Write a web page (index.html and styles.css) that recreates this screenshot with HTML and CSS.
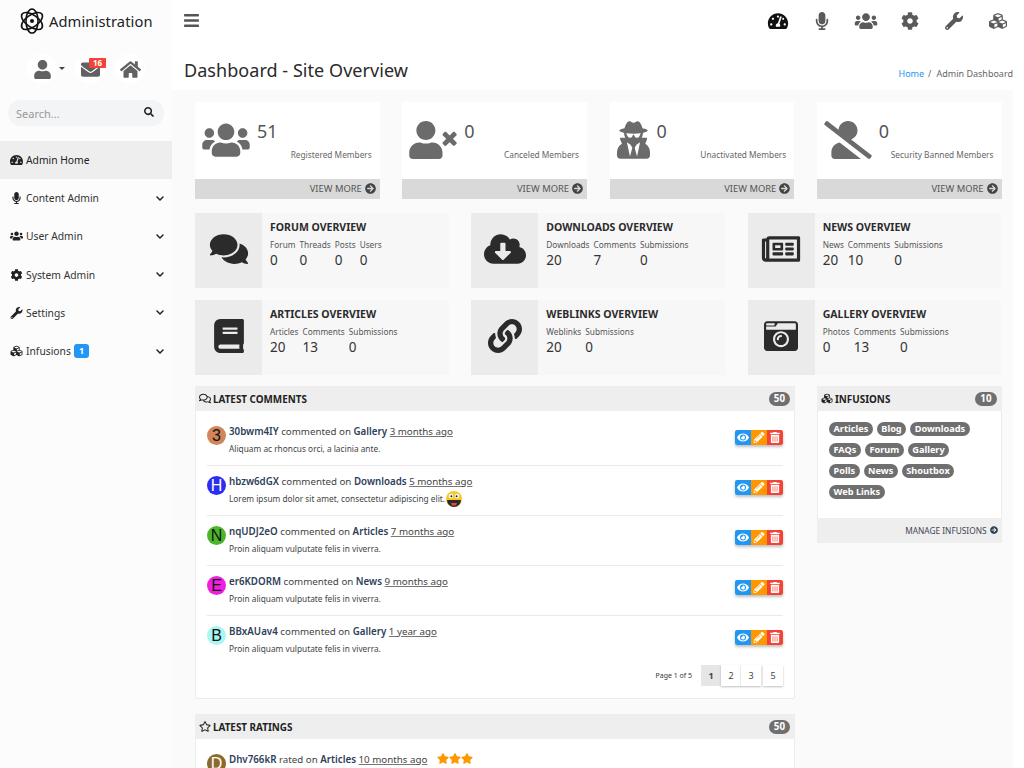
FILE: index.html
```html
<!DOCTYPE html>
<html lang="en">
<head>
<meta charset="utf-8">
<title>Administration</title>
<link rel="stylesheet" href="styles.css">
</head>
<body>
<svg class="sprite" xmlns="http://www.w3.org/2000/svg">
<symbol id="i-gauge" viewBox="0 0 576 512"><path d="M288 32C128.94 32 0 160.94 0 320c0 52.8 14.25 102.26 39.06 144.8 5.61 9.62 16.3 15.2 27.44 15.2h443c11.14 0 21.83-5.58 27.44-15.2C561.75 422.26 576 372.8 576 320c0-159.06-128.94-288-288-288zm0 64c14.71 0 26.58 10.13 30.32 23.65-1.11 2.26-2.64 4.23-3.45 6.67l-9.22 27.67c-5.13 3.49-10.97 6.01-17.64 6.01-17.67 0-32-14.33-32-32S270.33 96 288 96zM96 384c-17.67 0-32-14.33-32-32s14.33-32 32-32 32 14.33 32 32-14.33 32-32 32zm48-160c-17.67 0-32-14.33-32-32s14.33-32 32-32 32 14.33 32 32-14.33 32-32 32zm246.77-72.41l-61.33 184C343.13 347.33 352 364.54 352 384c0 11.72-3.38 22.55-8.88 32H232.88c-5.5-9.45-8.88-20.28-8.88-32 0-33.94 26.5-61.43 59.9-63.59l61.34-184.01c4.17-12.56 17.73-19.45 30.36-15.17 12.57 4.19 19.35 17.79 15.17 30.36zm14.66 57.2l15.52-46.55c3.47-1.29 7.13-2.23 11.05-2.23 17.67 0 32 14.33 32 32s-14.33 32-32 32c-11.38-.01-20.89-6.28-26.57-15.22zM480 384c-17.67 0-32-14.33-32-32s14.33-32 32-32 32 14.33 32 32-14.33 32-32 32z"/></symbol>
<symbol id="i-mic" viewBox="0 0 352 512"><path d="M176 352c53.02 0 96-42.98 96-96V96c0-53.02-42.98-96-96-96S80 42.98 80 96v160c0 53.02 42.98 96 96 96zm160-160h-16c-8.84 0-16 7.16-16 16v48c0 74.8-64.49 134.82-140.79 127.38C96.71 376.89 48 317.11 48 250.3V208c0-8.84-7.16-16-16-16H16c-8.84 0-16 7.16-16 16v40.16c0 89.64 63.97 169.55 152 181.69V464H96c-8.84 0-16 7.16-16 16v16c0 8.84 7.16 16 16 16h160c8.84 0 16-7.16 16-16v-16c0-8.84-7.16-16-16-16h-56v-33.77C285.71 418.47 352 344.9 352 256v-48c0-8.84-7.16-16-16-16z"/></symbol>
<symbol id="i-users" viewBox="0 0 640 512"><path d="M96 224c35.3 0 64-28.7 64-64s-28.7-64-64-64-64 28.7-64 64 28.7 64 64 64zm448 0c35.3 0 64-28.7 64-64s-28.7-64-64-64-64 28.7-64 64 28.7 64 64 64zm32 32h-64c-17.6 0-33.5 7.1-45.1 18.6 40.3 22.1 68.9 62 75.1 109.4h66c17.7 0 32-14.3 32-32v-32c0-35.3-28.7-64-64-64zm-256 0c61.9 0 112-50.1 112-112S381.9 32 320 32 208 82.1 208 144s50.1 112 112 112zm76.8 32h-8.3c-20.8 10-43.9 16-68.5 16s-47.6-6-68.5-16h-8.3C179.6 288 128 339.6 128 403.2V432c0 26.5 21.5 48 48 48h288c26.5 0 48-21.5 48-48v-28.8c0-63.6-51.6-115.2-115.2-115.2zm-223.7-13.4C161.5 263.1 145.6 256 128 256H64c-35.3 0-64 28.7-64 64v32c0 17.7 14.3 32 32 32h65.9c6.3-47.4 34.9-87.3 75.2-109.4z"/></symbol>
<symbol id="i-cog" viewBox="0 0 512 512"><path d="M487.4 315.7l-42.6-24.6c4.3-23.2 4.3-47 0-70.2l42.6-24.6c4.9-2.8 7.1-8.6 5.5-14-11.1-35.6-30-67.8-54.7-94.6-3.8-4.1-10-5.1-14.8-2.3L380.8 110c-17.9-15.4-38.5-27.3-60.8-35.1V25.8c0-5.6-3.9-10.5-9.4-11.7-36.7-8.2-74.3-7.8-109.2 0-5.5 1.2-9.4 6.1-9.4 11.7V75c-22.2 7.9-42.8 19.8-60.8 35.1L88.7 85.5c-4.9-2.8-11-1.9-14.8 2.3-24.7 26.7-43.6 58.9-54.7 94.6-1.7 5.4.6 11.2 5.5 14L67.3 221c-4.3 23.2-4.3 47 0 70.2l-42.6 24.6c-4.9 2.8-7.1 8.6-5.5 14 11.1 35.6 30 67.8 54.7 94.6 3.8 4.1 10 5.1 14.8 2.3l42.6-24.6c17.9 15.4 38.5 27.3 60.8 35.1v49.2c0 5.6 3.9 10.5 9.4 11.7 36.7 8.2 74.3 7.8 109.2 0 5.5-1.2 9.4-6.1 9.4-11.7v-49.2c22.2-7.9 42.8-19.8 60.8-35.1l42.6 24.6c4.9 2.8 11 1.9 14.8-2.3 24.7-26.7 43.6-58.9 54.7-94.6 1.5-5.5-.7-11.3-5.6-14.1zM256 336c-44.1 0-80-35.9-80-80s35.9-80 80-80 80 35.9 80 80-35.9 80-80 80z"/></symbol>
<symbol id="i-wrench" viewBox="0 0 512 512"><path d="M507.73 109.1c-2.24-9.03-13.54-12.09-20.12-5.51l-74.36 74.36-67.88-11.31-11.31-67.88 74.36-74.36c6.62-6.62 3.43-17.9-5.66-20.16-47.38-11.74-99.55.91-136.58 37.93-39.64 39.64-50.55 97.1-34.05 147.2L18.74 402.76c-24.99 24.99-24.99 65.51 0 90.5 24.99 24.99 65.51 24.99 90.5 0l213.21-213.21c50.12 16.71 107.47 5.68 147.37-34.22 37.07-37.07 49.7-89.32 37.91-136.73zM64 472c-13.25 0-24-10.75-24-24 0-13.26 10.75-24 24-24s24 10.74 24 24c0 13.25-10.75 24-24 24z"/></symbol>
<symbol id="i-cubes" viewBox="0 0 512 512"><path d="M488.6 250.2L392 214V105.5c0-15-9.3-28.4-23.4-33.7l-100-37.5c-8.1-3.1-17.1-3.1-25.3 0l-100 37.5c-14.1 5.3-23.4 18.7-23.4 33.7V214l-96.6 36.2C9.3 255.5 0 268.9 0 283.9V394c0 13.6 7.7 26.1 19.9 32.2l100 50c10.1 5.1 22.1 5.1 32.2 0l103.9-52 103.9 52c10.1 5.1 22.1 5.1 32.2 0l100-50c12.2-6.1 19.9-18.6 19.9-32.2V283.9c0-15-9.3-28.4-23.4-33.7zM358 214.8l-85 31.9v-68.2l85-37v73.3zM154 104.1l102-38.2 102 38.2v.6l-102 41.4-102-41.4v-.6zm84 291.1l-85 42.5v-79.1l85-38.8v75.4zm0-112l-102 41.4-102-41.4v-.6l102-38.2 102 38.2v.6zm240 112l-85 42.5v-79.1l85-38.8v75.4zm0-112l-102 41.4-102-41.4v-.6l102-38.2 102 38.2v.6z"/></symbol>
<symbol id="i-user" viewBox="0 0 448 512"><path d="M224 256c70.7 0 128-57.3 128-128S294.7 0 224 0 96 57.3 96 128s57.3 128 128 128zm89.6 32h-16.7c-22.2 10.2-46.9 16-72.9 16s-50.6-5.8-72.9-16h-16.7C60.2 288 0 348.2 0 422.4V464c0 26.5 21.5 48 48 48h352c26.5 0 48-21.5 48-48v-41.6c0-74.2-60.2-134.4-134.4-134.4z"/></symbol>
<symbol id="i-mail" viewBox="0 0 512 512"><path d="M502.3 190.8c3.9-3.1 9.7-.2 9.7 4.7V400c0 26.5-21.5 48-48 48H48c-26.5 0-48-21.5-48-48V195.6c0-5 5.7-7.8 9.7-4.7 22.4 17.4 52.1 39.5 154.1 113.6 21.1 15.4 56.7 47.8 92.2 47.6 35.7.3 72-32.8 92.3-47.6 102-74.1 131.6-96.3 154-113.7zM256 320c23.2.4 56.6-29.2 73.4-41.4 132.7-96.3 142.8-104.7 173.4-128.7 5.8-4.5 9.2-11.5 9.2-18.9v-19c0-26.5-21.5-48-48-48H48C21.5 64 0 85.5 0 112v19c0 7.4 3.4 14.3 9.2 18.9 30.6 23.9 40.7 32.4 173.4 128.7 16.8 12.2 50.2 41.8 73.4 41.4z"/></symbol>
<symbol id="i-home" viewBox="0 0 576 512"><path d="M280.37 148.26L96 300.11V464a16 16 0 0 0 16 16l112.06-.29a16 16 0 0 0 15.92-16V368a16 16 0 0 1 16-16h64a16 16 0 0 1 16 16v95.64a16 16 0 0 0 16 16.05L464 480a16 16 0 0 0 16-16V300L295.67 148.26a12.19 12.19 0 0 0-15.3 0zM571.6 251.47L488 182.56V44.05a12 12 0 0 0-12-12h-56a12 12 0 0 0-12 12v72.61L318.47 43a48 48 0 0 0-61 0L4.34 251.47a12 12 0 0 0-1.6 16.9l25.5 31A12 12 0 0 0 45.15 301l235.22-193.74a12.19 12.19 0 0 1 15.3 0L530.9 301a12 12 0 0 0 16.9-1.6l25.5-31a12 12 0 0 0-1.7-16.93z"/></symbol>
<symbol id="i-search" viewBox="0 0 512 512"><path d="M505 442.7L405.3 343c-4.5-4.5-10.6-7-17-7H372c27.6-35.3 44-79.7 44-128C416 93.1 322.9 0 208 0S0 93.1 0 208s93.1 208 208 208c48.3 0 92.7-16.4 128-44v16.3c0 6.4 2.5 12.5 7 17l99.7 99.7c9.4 9.4 24.6 9.4 33.9 0l28.3-28.3c9.4-9.4 9.4-24.6.1-34zM208 336c-70.7 0-128-57.2-128-128 0-70.7 57.2-128 128-128 70.7 0 128 57.2 128 128 0 70.7-57.2 128-128 128z"/></symbol>
<symbol id="i-chev" viewBox="0 0 448 512"><path d="M207.029 381.476L12.686 187.132c-9.373-9.373-9.373-24.569 0-33.941l22.667-22.667c9.357-9.357 24.522-9.375 33.901-.04L224 284.505l154.745-154.021c9.379-9.335 24.544-9.317 33.901.04l22.667 22.667c9.373 9.373 9.373 24.569 0 33.941L240.971 381.476c-9.373 9.372-24.569 9.372-33.942 0z"/></symbol>
<symbol id="i-bars" viewBox="0 0 448 512"><path d="M16 132h416c8.837 0 16-7.163 16-16V76c0-8.837-7.163-16-16-16H16C7.163 60 0 67.163 0 76v40c0 8.837 7.163 16 16 16zm0 160h416c8.837 0 16-7.163 16-16v-40c0-8.837-7.163-16-16-16H16c-8.837 0-16 7.163-16 16v40c0 8.837 7.163 16 16 16zm0 160h416c8.837 0 16-7.163 16-16v-40c0-8.837-7.163-16-16-16H16c-8.837 0-16 7.163-16 16v40c0 8.837 7.163 16 16 16z"/></symbol>
<symbol id="i-arrow" viewBox="0 0 512 512"><path d="M256 8c137 0 248 111 248 248S393 504 256 504 8 393 8 256 119 8 256 8zm-28.9 143.6l75.5 72.4H120c-13.3 0-24 10.7-24 24v16c0 13.3 10.7 24 24 24h182.6l-75.5 72.4c-9.7 9.3-9.9 24.8-.4 34.3l11 10.9c9.4 9.4 24.6 9.4 33.9 0L404.3 273c9.4-9.4 9.4-24.6 0-33.9L271.6 106.3c-9.4-9.4-24.6-9.4-33.9 0l-11 10.9c-9.5 9.6-9.3 25.1.4 34.4z"/></symbol>
<symbol id="i-user-x" viewBox="0 0 640 512"><path d="M589.6 240l45.6-45.6c6.3-6.3 6.3-16.5 0-22.8l-22.8-22.8c-6.3-6.3-16.5-6.3-22.8 0L544 194.4l-45.6-45.6c-6.3-6.3-16.5-6.3-22.8 0l-22.8 22.8c-6.3 6.3-6.3 16.5 0 22.8l45.6 45.6-45.6 45.6c-6.3 6.3-6.3 16.5 0 22.8l22.8 22.8c6.3 6.3 16.5 6.3 22.8 0l45.6-45.6 45.6 45.6c6.3 6.3 16.5 6.3 22.8 0l22.8-22.8c6.3-6.3 6.3-16.5 0-22.8L589.6 240zM224 256c70.7 0 128-57.3 128-128S294.7 0 224 0 96 57.3 96 128s57.3 128 128 128zm89.6 32h-16.7c-22.2 10.2-46.9 16-72.9 16s-50.6-5.8-72.9-16h-16.7C60.2 288 0 348.2 0 422.4V464c0 26.5 21.5 48 48 48h352c26.5 0 48-21.5 48-48v-41.6c0-74.2-60.2-134.4-134.4-134.4z"/></symbol>
<symbol id="i-secret" viewBox="0 0 448 512"><path d="M383.9 308.3l23.9-62.6c4-10.5-3.7-21.7-15-21.7h-58.5c11-18.9 17.8-40.6 17.8-64v-.3c39.2-7.8 64-19.1 64-31.7 0-13.3-27.3-25.1-70.1-33-9.2-32.8-27-65.8-40.6-82.8-9.5-11.9-25.9-15.6-39.5-8.8l-27.6 13.8c-9 4.5-19.6 4.5-28.6 0L182.1 3.4c-13.6-6.8-30-3.1-39.5 8.8-13.5 17-31.4 50-40.6 82.8-42.7 7.9-70 19.7-70 33 0 12.6 24.8 23.9 64 31.7v.3c0 23.4 6.8 45.1 17.8 64H56.3c-11.5 0-19.2 11.7-14.7 22.3l25.8 60.2C27.3 329.8 0 372.7 0 422.4v44.8C0 491.9 20.1 512 44.8 512h358.4c24.7 0 44.8-20.1 44.8-44.8v-44.8c0-48.4-25.8-90.4-64.1-114.1zM176 480l-41.6-192 49.6 32 24 40-32 120zm96 0l-32-120 24-40 49.6-32L272 480zm41.7-298.5c-3.9 11.9-7 24.6-16.5 33.4-10.1 9.3-48 22.4-64-25-2.8-8.4-15.4-8.4-18.3 0-17 50.2-56 32.4-64 25-9.5-8.8-12.7-21.5-16.5-33.4-.8-2.5-6.3-5.7-6.3-5.8v-10.8c28.3 3.6 61 5.8 96 5.8s67.7-2.1 96-5.8v10.8c-.1.1-5.6 3.2-6.4 5.8z"/></symbol>
<symbol id="i-slash" viewBox="0 0 640 512"><path d="M633.8 458.1L362.3 248.3C412.1 230.7 448 183.8 448 128 448 57.3 390.7 0 320 0c-67.1 0-121.5 51.8-126.9 117.4L45.5 3.4C38.5-2 28.5-.8 23 6.2L3.4 31.4c-5.4 7-4.2 17 2.8 22.4l588.4 454.7c7 5.4 17 4.2 22.5-2.8l19.6-25.3c5.4-6.8 4.1-16.9-2.9-22.3zM96 422.4V464c0 26.5 21.5 48 48 48h350.2L207.4 290.3C144.2 301.3 96 356 96 422.4z"/></symbol>
<symbol id="i-comments" viewBox="0 0 576 512"><path d="M416 192c0-88.4-93.1-160-208-160S0 103.6 0 192c0 34.3 14.1 65.9 38 92-13.4 30.2-35.5 54.2-35.8 54.5-2.2 2.3-2.8 5.7-1.5 8.7S4.8 352 8 352c36.6 0 66.9-12.3 88.7-25 32.2 15.7 70.3 25 111.3 25 114.9 0 208-71.6 208-160zm122 220c23.9-26 38-57.7 38-92 0-66.9-53.5-124.2-129.3-148.1.9 6.6 1.3 13.3 1.3 20.1 0 105.9-107.7 192-240 192-10.8 0-21.3-.8-31.7-1.9C207.8 439.6 281.8 480 368 480c41 0 79.1-9.2 111.3-25 21.8 12.7 52.1 25 88.7 25 3.2 0 6.1-1.9 7.3-4.8 1.3-2.9.7-6.3-1.5-8.7-.3-.3-22.4-24.2-35.8-54.5z"/></symbol>
<symbol id="i-cloud" viewBox="0 0 640 512"><path d="M537.6 226.6c4.1-10.7 6.4-22.4 6.4-34.6 0-53-43-96-96-96-19.7 0-38.1 6-53.3 16.2C367 64.2 315.3 32 256 32c-88.4 0-160 71.6-160 160 0 2.7.1 5.4.2 8.1C40.2 219.8 0 273.2 0 336c0 79.5 64.5 144 144 144h368c70.7 0 128-57.3 128-128 0-61.9-44-113.6-102.4-125.4zm-132.9 88.7L299.3 420.7c-6.2 6.2-16.4 6.2-22.6 0L171.3 315.3c-10.1-10.1-2.9-27.3 11.3-27.3H248V176c0-8.8 7.2-16 16-16h48c8.8 0 16 7.2 16 16v112h65.4c14.2 0 21.4 17.2 11.3 27.3z"/></symbol>
<symbol id="i-news" viewBox="0 0 576 512"><path d="M552 64H112c-20.858 0-38.643 13.377-45.248 32H24c-13.255 0-24 10.745-24 24v272c0 30.928 25.072 56 56 56h496c13.255 0 24-10.745 24-24V88c0-13.255-10.745-24-24-24zM48 392V144h16v248c0 4.411-3.589 8-8 8s-8-3.589-8-8zm480 8H111.422c.374-2.614.578-5.283.578-8V112h416v288zM172 280h136c6.627 0 12-5.373 12-12v-96c0-6.627-5.373-12-12-12H172c-6.627 0-12 5.373-12 12v96c0 6.627 5.373 12 12 12zm28-80h80v40h-80v-40zm-40 140v-24c0-6.627 5.373-12 12-12h136c6.627 0 12 5.373 12 12v24c0 6.627-5.373 12-12 12H172c-6.627 0-12-5.373-12-12zm192 0v-24c0-6.627 5.373-12 12-12h104c6.627 0 12 5.373 12 12v24c0 6.627-5.373 12-12 12H364c-6.627 0-12-5.373-12-12zm0-144v-24c0-6.627 5.373-12 12-12h104c6.627 0 12 5.373 12 12v24c0 6.627-5.373 12-12 12H364c-6.627 0-12-5.373-12-12zm0 72v-24c0-6.627 5.373-12 12-12h104c6.627 0 12 5.373 12 12v24c0 6.627-5.373 12-12 12H364c-6.627 0-12-5.373-12-12z"/></symbol>
<symbol id="i-book" viewBox="0 0 448 512"><path d="M448 360V24c0-13.3-10.7-24-24-24H96C43 0 0 43 0 96v320c0 53 43 96 96 96h328c13.3 0 24-10.7 24-24v-16c0-7.5-3.5-14.3-8.9-18.7-4.2-15.4-4.2-59.3 0-74.7 5.4-4.3 8.9-11.1 8.9-18.6zM128 134c0-3.3 2.7-6 6-6h212c3.3 0 6 2.7 6 6v20c0 3.3-2.7 6-6 6H134c-3.3 0-6-2.7-6-6v-20zm0 64c0-3.3 2.7-6 6-6h212c3.3 0 6 2.7 6 6v20c0 3.3-2.7 6-6 6H134c-3.3 0-6-2.7-6-6v-20zm253.4 250H96c-17.7 0-32-14.3-32-32 0-17.6 14.4-32 32-32h285.4c-1.9 17.1-1.9 46.9 0 64z"/></symbol>
<symbol id="i-link" viewBox="0 0 512 512"><path d="M326.612 185.391c59.747 59.809 58.927 155.698.36 214.59-.11.12-.24.25-.36.37l-67.2 67.2c-59.27 59.27-155.699 59.262-214.96 0-59.27-59.26-59.27-155.7 0-214.96l37.106-37.106c9.84-9.84 26.786-3.3 27.294 10.606.648 17.722 3.826 35.527 9.69 52.721 1.986 5.822.567 12.262-3.783 16.612l-13.087 13.087c-28.026 28.026-28.905 73.66-1.155 101.96 28.024 28.579 74.086 28.749 102.325.51l67.2-67.19c28.191-28.191 28.073-73.757 0-101.83-3.701-3.694-7.429-6.564-10.341-8.569a16.037 16.037 0 0 1-6.947-12.606c-.396-10.567 3.348-21.456 11.698-29.806l21.054-21.055c5.521-5.521 14.182-6.199 20.584-1.731a152.482 152.482 0 0 1 20.522 17.197zM467.547 44.449c-59.261-59.262-155.69-59.27-214.96 0l-67.2 67.2c-.12.12-.25.25-.36.37-58.566 58.892-59.387 154.781.36 214.59a152.454 152.454 0 0 0 20.521 17.196c6.402 4.468 15.064 3.789 20.584-1.731l21.054-21.055c8.35-8.35 12.094-19.239 11.698-29.806a16.037 16.037 0 0 0-6.947-12.606c-2.912-2.005-6.64-4.875-10.341-8.569-28.073-28.073-28.191-73.639 0-101.83l67.2-67.19c28.239-28.239 74.3-28.069 102.325.51 27.75 28.3 26.872 73.934-1.155 101.96l-13.087 13.087c-4.35 4.35-5.769 10.79-3.783 16.612 5.864 17.194 9.042 34.999 9.69 52.721.509 13.906 17.454 20.446 27.294 10.606l37.106-37.106c59.271-59.259 59.271-155.699.001-214.959z"/></symbol>
<symbol id="i-camera" viewBox="0 0 512 512"><path d="M48 32C21.5 32 0 53.5 0 80v352c0 26.5 21.5 48 48 48h416c26.5 0 48-21.5 48-48V80c0-26.5-21.5-48-48-48H48zm0 32h106c3.3 0 6 2.7 6 6v20c0 3.3-2.7 6-6 6H38c-3.3 0-6-2.7-6-6V80c0-8.8 7.2-16 16-16zm426 96H38c-3.3 0-6-2.7-6-6v-36c0-3.3 2.7-6 6-6h138l30.2-45.3c1.1-1.7 3-2.7 5-2.7H464c8.8 0 16 7.2 16 16v74c0 3.3-2.7 6-6 6zM256 424c-66.2 0-120-53.8-120-120s53.8-120 120-120 120 53.8 120 120-53.8 120-120 120zm0-208c-48.5 0-88 39.5-88 88s39.5 88 88 88 88-39.5 88-88-39.5-88-88-88zm-48 104c-8.8 0-16-7.2-16-16 0-35.3 28.7-64 64-64 8.8 0 16 7.2 16 16s-7.2 16-16 16c-17.6 0-32 14.4-32 32 0 8.8-7.2 16-16 16z"/></symbol>
<symbol id="i-comments-o" viewBox="0 0 576 512"><path d="M532 386.2c27.5-27.1 44-61.1 44-98.2 0-80-76.5-146.1-176.2-157.9C368.3 72.5 294.3 32 208 32 93.1 32 0 103.6 0 192c0 37 16.5 71 44 98.2-15.3 30.7-37.3 54.5-37.7 54.9-6.3 6.7-8.1 16.5-4.4 25 3.6 8.5 12 14 21.2 14 53.5 0 96.7-20.2 125.2-38.8 9.2 2.1 18.7 3.7 28.4 4.9C208.1 407.6 281.8 448 368 448c20.8 0 40.8-2.4 59.8-6.8C456.3 459.7 499.4 480 553 480c9.2 0 17.5-5.5 21.2-14 3.6-8.5 1.9-18.3-4.4-25-.4-.3-22.5-24.1-37.8-54.8zm-392.8-92.3L122.1 305c-14.1 9.1-28.5 16.3-43.1 21.4 2.7-4.7 5.4-9.7 8-14.8l15.5-31.1L77.7 256C64.2 242.6 48 220.7 48 192c0-60.7 73.3-112 160-112s160 51.3 160 112-73.3 112-160 112c-16.5 0-33-1.9-49-5.6l-19.8-4.5zM498.3 352l-24.7 24.4 15.5 31.1c2.6 5.1 5.3 10.1 8 14.8-14.6-5.1-29-12.3-43.1-21.4l-17.1-11.1-19.9 4.6c-16 3.7-32.5 5.6-49 5.6-54 0-102.2-20.1-131.3-49.7C338 339.5 416 272.9 416 192c0-3.4-.3-6.7-.5-10C479.7 196.5 528 238.8 528 288c0 28.7-16.2 50.6-29.7 64z"/></symbol>
<symbol id="i-star-o" viewBox="0 0 576 512"><path d="M528.1 171.5L382 150.2 316.7 17.8c-11.7-23.6-45.6-23.9-57.4 0L194 150.2 47.9 171.5c-26.2 3.8-36.7 36.1-17.7 54.6l105.7 103-25 145.5c-4.5 26.3 23.2 46 46.4 33.7L288 439.6l130.7 68.7c23.2 12.2 50.9-7.4 46.4-33.7l-25-145.5 105.7-103c19-18.5 8.5-50.8-17.7-54.6zM388.6 312.3l23.7 138.4L288 385.4l-124.3 65.3 23.7-138.4-100.6-98 139-20.2 62.2-126 62.2 126 139 20.2-100.6 98z"/></symbol>
<symbol id="i-star" viewBox="0 0 576 512"><path d="M259.3 17.8L194 150.2 47.9 171.5c-26.2 3.8-36.7 36.1-17.7 54.6l105.7 103-25 145.5c-4.5 26.3 23.2 46 46.4 33.7L288 439.6l130.7 68.7c23.2 12.2 50.9-7.4 46.4-33.7l-25-145.5 105.7-103c19-18.5 8.5-50.8-17.7-54.6L382 150.2 316.7 17.8c-11.7-23.6-45.6-23.9-57.4 0z"/></symbol>
<symbol id="i-eye" viewBox="0 0 576 512"><path d="M572.52 241.4C518.29 135.59 410.93 64 288 64S57.68 135.64 3.48 241.41a32.35 32.35 0 0 0 0 29.19C57.71 376.41 165.07 448 288 448s230.32-71.64 284.52-177.41a32.35 32.35 0 0 0 0-29.19zM288 400a144 144 0 1 1 144-144 143.93 143.93 0 0 1-144 144zm0-240a95.31 95.31 0 0 0-25.31 3.79 47.85 47.85 0 0 1-66.9 66.9A95.78 95.78 0 1 0 288 160z"/></symbol>
<symbol id="i-pencil" viewBox="0 0 512 512"><path d="M497.9 142.1l-46.1 46.1c-4.7 4.7-12.3 4.7-17 0l-111-111c-4.7-4.7-4.7-12.3 0-17l46.1-46.1c18.7-18.7 49.1-18.7 67.9 0l60.1 60.1c18.8 18.7 18.8 49.1 0 67.9zM284.2 99.8L21.6 362.4.4 483.9c-2.9 16.4 11.4 30.6 27.8 27.8l121.5-21.3 262.6-262.6c4.7-4.7 4.7-12.3 0-17l-111-111c-4.8-4.7-12.4-4.7-17.1 0zM124.1 339.9c-5.5-5.5-5.5-14.3 0-19.8l154-154c5.5-5.5 14.3-5.5 19.8 0s5.5 14.3 0 19.8l-154 154c-5.5 5.5-14.3 5.5-19.8 0zM88 424h48v36.3l-64.5 11.3-31.1-31.1L51.7 376H88v48z"/></symbol>
<symbol id="i-trash" viewBox="0 0 448 512"><path d="M32 464a48 48 0 0 0 48 48h288a48 48 0 0 0 48-48V128H32zm272-256a16 16 0 0 1 32 0v224a16 16 0 0 1-32 0zm-96 0a16 16 0 0 1 32 0v224a16 16 0 0 1-32 0zm-96 0a16 16 0 0 1 32 0v224a16 16 0 0 1-32 0zM432 32H312l-9.4-18.7A24 24 0 0 0 281.1 0H166.8a23.72 23.72 0 0 0-21.4 13.3L136 32H16A16 16 0 0 0 0 48v32a16 16 0 0 0 16 16h416a16 16 0 0 0 16-16V48a16 16 0 0 0-16-16z"/></symbol>
</svg>

<div class="app">
<aside class="sidebar">
  <div class="brand">
    <svg class="logo" viewBox="0 0 28 28"><g fill="none" stroke="#111" stroke-width="1.7"><ellipse cx="14" cy="14" rx="13" ry="6.5" transform="rotate(35 14 14)"/><ellipse cx="14" cy="14" rx="13" ry="6.5" transform="rotate(-35 14 14)"/><ellipse cx="14" cy="14" rx="6.5" ry="13"/></g><circle cx="14" cy="14" r="2.2" fill="#111"/></svg>
    <span class="brand-name">Administration</span>
  </div>
  <div class="quick">
    <span class="quick-btn q-user"><svg class="qi-user"><use href="#i-user"/></svg><span class="caret"></span></span>
    <span class="quick-btn q-mail"><svg class="qi-mail"><use href="#i-mail"/></svg><span class="mail-badge">16</span></span>
    <span class="quick-btn"><svg class="qi-home"><use href="#i-home"/></svg></span>
  </div>
  <div class="search"><span>Search...</span><svg><use href="#i-search"/></svg></div>
  <nav class="nav">
    <a class="nav-item active"><svg class="nav-icon"><use href="#i-gauge"/></svg><span class="nav-text">Admin Home</span></a>
    <a class="nav-item"><svg class="nav-icon"><use href="#i-mic"/></svg><span class="nav-text">Content Admin</span><svg class="chev"><use href="#i-chev"/></svg></a>
    <a class="nav-item"><svg class="nav-icon"><use href="#i-users"/></svg><span class="nav-text">User Admin</span><svg class="chev"><use href="#i-chev"/></svg></a>
    <a class="nav-item"><svg class="nav-icon"><use href="#i-cog"/></svg><span class="nav-text">System Admin</span><svg class="chev"><use href="#i-chev"/></svg></a>
    <a class="nav-item"><svg class="nav-icon"><use href="#i-wrench"/></svg><span class="nav-text">Settings</span><svg class="chev"><use href="#i-chev"/></svg></a>
    <a class="nav-item"><svg class="nav-icon"><use href="#i-cubes"/></svg><span class="nav-text">Infusions</span><span class="nav-badge">1</span><svg class="chev"><use href="#i-chev"/></svg></a>
  </nav>
</aside>

<div class="main">
  <header class="topbar">
    <svg class="burger"><use href="#i-bars"/></svg>
    <div class="top-icons">
      <svg class="dark"><use href="#i-gauge"/></svg>
      <svg><use href="#i-mic"/></svg>
      <svg><use href="#i-users"/></svg>
      <svg><use href="#i-cog"/></svg>
      <svg><use href="#i-wrench"/></svg>
      <svg><use href="#i-cubes"/></svg>
    </div>
  </header>
  <div class="page-head">
    <h1>Dashboard - Site Overview</h1>
    <div class="crumbs"><a>Home</a><span class="sep">/</span><span>Admin Dashboard</span></div>
  </div>
  <div class="content">
    <section class="stats">
      <div class="stat">
        <div class="stat-body"><svg class="stat-icon wide"><use href="#i-users"/></svg><div class="stat-text"><span class="stat-num">51</span><span class="stat-label">Registered Members</span></div></div>
        <a class="stat-foot">VIEW MORE <svg><use href="#i-arrow"/></svg></a>
      </div>
      <div class="stat">
        <div class="stat-body"><svg class="stat-icon wide"><use href="#i-user-x"/></svg><div class="stat-text"><span class="stat-num">0</span><span class="stat-label">Canceled Members</span></div></div>
        <a class="stat-foot">VIEW MORE <svg><use href="#i-arrow"/></svg></a>
      </div>
      <div class="stat">
        <div class="stat-body"><svg class="stat-icon narrow"><use href="#i-secret"/></svg><div class="stat-text"><span class="stat-num">0</span><span class="stat-label">Unactivated Members</span></div></div>
        <a class="stat-foot">VIEW MORE <svg><use href="#i-arrow"/></svg></a>
      </div>
      <div class="stat">
        <div class="stat-body"><svg class="stat-icon wide"><use href="#i-slash"/></svg><div class="stat-text"><span class="stat-num">0</span><span class="stat-label">Security Banned Members</span></div></div>
        <a class="stat-foot">VIEW MORE <svg><use href="#i-arrow"/></svg></a>
      </div>
    </section>

    <section class="overviews">
      <div class="ov">
        <div class="ov-icon"><svg><use href="#i-comments"/></svg></div>
        <div class="ov-body"><h3>FORUM OVERVIEW</h3>
          <div class="ov-cols"><div><small>Forum</small><b>0</b></div><div><small>Threads</small><b>0</b></div><div><small>Posts</small><b>0</b></div><div><small>Users</small><b>0</b></div></div></div>
      </div>
      <div class="ov">
        <div class="ov-icon"><svg><use href="#i-cloud"/></svg></div>
        <div class="ov-body"><h3>DOWNLOADS OVERVIEW</h3>
          <div class="ov-cols"><div><small>Downloads</small><b>20</b></div><div><small>Comments</small><b>7</b></div><div><small>Submissions</small><b>0</b></div></div></div>
      </div>
      <div class="ov">
        <div class="ov-icon"><svg><use href="#i-news"/></svg></div>
        <div class="ov-body"><h3>NEWS OVERVIEW</h3>
          <div class="ov-cols"><div><small>News</small><b>20</b></div><div><small>Comments</small><b>10</b></div><div><small>Submissions</small><b>0</b></div></div></div>
      </div>
      <div class="ov">
        <div class="ov-icon"><svg><use href="#i-book"/></svg></div>
        <div class="ov-body"><h3>ARTICLES OVERVIEW</h3>
          <div class="ov-cols"><div><small>Articles</small><b>20</b></div><div><small>Comments</small><b>13</b></div><div><small>Submissions</small><b>0</b></div></div></div>
      </div>
      <div class="ov">
        <div class="ov-icon"><svg><use href="#i-link"/></svg></div>
        <div class="ov-body"><h3>WEBLINKS OVERVIEW</h3>
          <div class="ov-cols"><div><small>Weblinks</small><b>20</b></div><div><small>Submissions</small><b>0</b></div></div></div>
      </div>
      <div class="ov">
        <div class="ov-icon"><svg><use href="#i-camera"/></svg></div>
        <div class="ov-body"><h3>GALLERY OVERVIEW</h3>
          <div class="ov-cols"><div><small>Photos</small><b>0</b></div><div><small>Comments</small><b>13</b></div><div><small>Submissions</small><b>0</b></div></div></div>
      </div>
    </section>

    <section class="lower">
      <div class="lower-left">
        <div class="panel">
          <div class="panel-head"><svg class="ph-icon"><use href="#i-comments-o"/></svg><span class="ph-title">LATEST COMMENTS</span><span class="count">50</span></div>
          <div class="panel-body">
            <div class="item">
              <span class="avatar a-orange">3</span>
              <div class="item-text"><p class="line"><a>30bwm4IY</a> commented on <a>Gallery</a> <u>3 months ago</u></p><p class="sub">Aliquam ac rhoncus orci, a lacinia ante.</p></div>
              <div class="actions"><span class="act blue"><svg><use href="#i-eye"/></svg></span><span class="act amber"><svg><use href="#i-pencil"/></svg></span><span class="act red"><svg><use href="#i-trash"/></svg></span></div>
            </div>
            <div class="item">
              <span class="avatar a-blue">H</span>
              <div class="item-text"><p class="line"><a>hbzw6dGX</a> commented on <a>Downloads</a> <u>5 months ago</u></p><p class="sub">Lorem ipsum dolor sit amet, consectetur adipiscing elit.<svg class="emoji" viewBox="0 0 16 16"><circle cx="8" cy="8" r="8" fill="#f5c82e"/><path d="M1 9h14a7 7 0 0 1-14 0z" fill="#2b2b2b"/><path d="M5 12h6l-1 2.5H6z" fill="#e5483f"/><circle cx="5" cy="5" r="2.2" fill="#fff"/><circle cx="11" cy="5" r="2.2" fill="#fff"/><circle cx="5.4" cy="5.2" r="1" fill="#222"/><circle cx="10.6" cy="5.2" r="1" fill="#222"/></svg></p></div>
              <div class="actions"><span class="act blue"><svg><use href="#i-eye"/></svg></span><span class="act amber"><svg><use href="#i-pencil"/></svg></span><span class="act red"><svg><use href="#i-trash"/></svg></span></div>
            </div>
            <div class="item">
              <span class="avatar a-green">N</span>
              <div class="item-text"><p class="line"><a>nqUDJ2eO</a> commented on <a>Articles</a> <u>7 months ago</u></p><p class="sub">Proin aliquam vulputate felis in viverra.</p></div>
              <div class="actions"><span class="act blue"><svg><use href="#i-eye"/></svg></span><span class="act amber"><svg><use href="#i-pencil"/></svg></span><span class="act red"><svg><use href="#i-trash"/></svg></span></div>
            </div>
            <div class="item">
              <span class="avatar a-pink">E</span>
              <div class="item-text"><p class="line"><a>er6KDORM</a> commented on <a>News</a> <u>9 months ago</u></p><p class="sub">Proin aliquam vulputate felis in viverra.</p></div>
              <div class="actions"><span class="act blue"><svg><use href="#i-eye"/></svg></span><span class="act amber"><svg><use href="#i-pencil"/></svg></span><span class="act red"><svg><use href="#i-trash"/></svg></span></div>
            </div>
            <div class="item last">
              <span class="avatar a-cyan">B</span>
              <div class="item-text"><p class="line"><a>BBxAUav4</a> commented on <a>Gallery</a> <u>1 year ago</u></p><p class="sub">Proin aliquam vulputate felis in viverra.</p></div>
              <div class="actions"><span class="act blue"><svg><use href="#i-eye"/></svg></span><span class="act amber"><svg><use href="#i-pencil"/></svg></span><span class="act red"><svg><use href="#i-trash"/></svg></span></div>
            </div>
            <div class="pager"><span class="pager-text">Page 1 of 5</span><span class="pg current">1</span><span class="pg">2</span><span class="pg">3</span><span class="pg spaced">5</span></div>
          </div>
        </div>
        <div class="panel">
          <div class="panel-head"><svg class="ph-icon"><use href="#i-star-o"/></svg><span class="ph-title">LATEST RATINGS</span><span class="count">50</span></div>
          <div class="panel-body">
            <div class="item">
              <span class="avatar a-brown">D</span>
              <div class="item-text"><p class="line"><a>Dhv766kR</a> rated on <a>Articles</a> <u>10 months ago</u><span class="stars"><svg><use href="#i-star"/></svg><svg><use href="#i-star"/></svg><svg><use href="#i-star"/></svg></span></p></div>
            </div>
          </div>
        </div>
      </div>
      <aside class="lower-right">
        <div class="panel">
          <div class="panel-head"><svg class="ph-icon"><use href="#i-cubes"/></svg><span class="ph-title">INFUSIONS</span><span class="count">10</span></div>
          <div class="tags">
            <span class="tag">Articles</span><span class="tag">Blog</span><span class="tag">Downloads</span><span class="tag">FAQs</span><span class="tag">Forum</span><span class="tag">Gallery</span><span class="tag">Polls</span><span class="tag">News</span><span class="tag">Shoutbox</span><span class="tag">Web Links</span>
          </div>
          <a class="panel-foot">MANAGE INFUSIONS <svg><use href="#i-arrow"/></svg></a>
        </div>
      </aside>
    </section>
  </div>
</div>
</div>
</body>
</html>
```
FILE: styles.css
```css
* { box-sizing: border-box; }
html, body { margin: 0; height: 100%; overflow: hidden; background: #fff; }
body { font-family: "Noto Sans", "Open Sans", sans-serif; font-size: 10.3px; color: #333; }
.sprite { display: none; }
svg { fill: currentColor; display: block; }
p, h1, h3 { margin: 0; }

.app { display: flex; width: 1024px; height: 768px; overflow: hidden; }

/* sidebar */
.sidebar { width: 172px; flex: none; background: #fcfcfc; }
.brand { height: 41px; display: flex; align-items: center; padding-left: 19px; gap: 4px; }
.logo { width: 26px; height: 26px; flex: none; }
.brand-name { font-size: 14.7px; color: #222; letter-spacing: .1px; }
.quick { display: flex; margin-top: 13px; padding-left: 27px; }
.quick-btn { width: 30px; height: 30px; border-radius: 50%; background: #fff; display: flex; align-items: center; justify-content: center; color: #616161; position: relative; }
.q-user { margin-right: 18px; }
.q-mail { margin-right: 10px; }
.qi-user { width: 17px; height: 19px; }
.caret { position: absolute; left: 32px; top: 13px; border: 3px solid transparent; border-top: 3px solid #444; border-bottom: 0; }
.qi-mail { width: 19px; height: 19px; }
.mail-badge { position: absolute; left: 14px; top: 4px; background: #f44336; color: #fff; font-size: 8px; font-weight: 700; line-height: 10px; padding: 0 4px; border-radius: 1px; height: 10px; }
.qi-home { width: 21px; height: 19px; }
.search { margin: 16px 8px 0 8px; height: 26px; border-radius: 13px; background: #f3f4f5; display: flex; align-items: center; justify-content: space-between; padding: 0 10px 0 8px; font-size: 11px; color: #999; }
.search svg { width: 10px; height: 10px; color: #222; margin-top: -3px; }
.nav { margin-top: 15px; }
.nav-item { height: 38.2px; display: flex; align-items: center; padding-left: 10px; padding-right: 8px; color: #333; }
.nav-item.active { background: #eee; color: #222; }
.nav-icon { width: 13px; height: 12px; flex: none; color: #222; }
.nav-text { margin-left: 3px; }
.nav-badge { margin-left: 3px; background: #2196f3; color: #fff; border-radius: 3px; font-size: 9px; font-weight: 700; line-height: 14px; padding: 0 5px; }
.chev { width: 8px; height: 9px; margin-left: auto; color: #222; }

/* topbar */
.main { flex: 1; min-width: 0; display: flex; flex-direction: column; padding-right: 11px; background: #fff; }
.topbar { height: 41px; flex: none; display: flex; align-items: center; justify-content: space-between; padding-left: 12px; }
.burger { width: 15px; height: 17px; color: #555; }
.top-icons { display: flex; align-items: center; color: #5a5a5a; margin-right: -7px; padding-top: 1px; }
.top-icons svg { width: 44px; height: 18px; }
.top-icons .dark { color: #111; }
.page-head { height: 49px; flex: none; display: flex; align-items: center; justify-content: space-between; padding: 8px 0 0 12px; }
h1 { font-size: 18px; font-weight: 400; color: #2a2a2a; letter-spacing: .05px; }
.crumbs { font-size: 9px; color: #666; display: flex; padding-top: 7px; }
.crumbs a { color: #2196f3; }
.sep { margin: 0 5px 0 4px; }

/* content */
.content { flex: 1; background: #fafafa; padding: 12px 11.5px 0 23px; }
.stats { display: grid; grid-template-columns: repeat(4, 1fr); column-gap: 22.5px; }
.stat { height: 97px; display: flex; flex-direction: column; }
.stat-body { flex: 1; background: #fff; display: flex; align-items: flex-start; padding: 19px 8px 0 7px; }
.stat-icon { height: 38px; flex: none; color: #6b6b6b; }
.stat-icon.wide { width: 48px; }
.stat-icon.narrow { width: 33px; }
.stat-text { flex: 1; display: flex; flex-direction: column; margin-left: 7px; margin-top: -4px; }
.stat-num { font-size: 18px; color: #555; line-height: 28px; }
.stat-label { align-self: flex-end; font-size: 8.3px; line-height: 12px; margin-top: 4px; color: #666; white-space: nowrap; }
.stat-foot { height: 20px; background: #d9d9d9; display: flex; align-items: center; justify-content: flex-end; gap: 3px; padding: 0 4px 1px 0; font-size: 9.4px; color: #555; }
.stat-foot svg { width: 11px; height: 11px; color: #444; }

.overviews { display: grid; grid-template-columns: repeat(3, 1fr); column-gap: 22.5px; row-gap: 11.5px; margin-top: 14px; }
.ov { height: 75px; display: flex; background: #f7f7f7; }
.ov-icon { width: 67px; flex: none; background: #ebebeb; display: flex; align-items: center; justify-content: center; padding-bottom: 3px; color: #2b2b2b; }
.ov-icon svg { width: 42px; height: 34px; }
.ov-body { padding: 6px 0 0 8px; }
.ov-body h3 { font-size: 10.5px; font-weight: 700; color: #2b2b2b; line-height: 16px; }
.ov-cols { display: flex; gap: 4px; margin-top: 4px; }
.ov-cols small { display: block; font-size: 8.25px; color: #555; line-height: 12px; }
.ov-cols b { display: block; font-weight: 400; font-size: 13.5px; color: #333; line-height: 18px; }

.lower { display: grid; grid-template-columns: 600px 184.5px; column-gap: 22px; margin-top: 11px; align-items: start; }
.panel { background: #fff; border: 1px solid #ececec; border-radius: 2px; margin-bottom: 15px; }
.panel-head { height: 25px; background: #eee; display: flex; align-items: center; padding: 1px 5px 0 4px; margin: -1px -1px 0; }
.ph-icon { width: 12px; height: 11px; color: #222; flex: none; }
.ph-title { margin-left: 2px; font-size: 9.9px; font-weight: 700; color: #222; flex: 1; }
.count { background: #6f6f6f; color: #fff; border-radius: 7px; font-size: 9.75px; font-weight: 700; line-height: 14px; padding: 0 5px; }
.panel-body { padding: 5px 11px 12px; }
.item { height: 50px; display: flex; align-items: flex-start; border-bottom: 1px solid #e9e9e9; padding-top: 10.5px; }
.item.last { border-bottom: 0; height: 49px; }
.avatar { width: 19px; height: 19px; border-radius: 50%; flex: none; display: flex; align-items: center; justify-content: center; font-family: "Liberation Sans", sans-serif; font-size: 16px; color: #111; }
.a-orange { background: #d28559; }
.a-blue { background: #2b2df0; color: #fff; }
.a-green { background: #4cb62b; }
.a-pink { background: #ef20dd; }
.a-cyan { background: #a8f7f4; }
.a-brown { background: #8d6a2c; color: #fff; }
.item-text { flex: 1; margin-left: 3px; min-width: 0; }
.line { font-size: 9.75px; line-height: 13px; color: #444; margin-top: -1.5px; white-space: nowrap; }
.line a { color: #2d4059; font-weight: 600; }
.line u { color: #444; text-decoration-color: #777; text-underline-offset: 1px; }
.sub { font-size: 8.3px; color: #444; line-height: 12px; margin-top: 5.5px; display: flex; align-items: center; height: 12px; white-space: nowrap; }
.emoji { width: 16px; height: 16px; margin-left: 1px; }
.actions { display: flex; margin-top: 3.5px; border-radius: 2px; overflow: hidden; box-shadow: 0 2px 3px rgba(0,0,0,.25); flex: none; }
.act { width: 16px; height: 15px; display: flex; align-items: center; justify-content: center; color: #fff; }
.act svg { height: 11px; width: 12px; }
.act.blue { background: #2196f3; }
.act.amber { background: #ff9800; }
.act.red { background: #f44336; }
.pager { display: flex; justify-content: flex-end; align-items: center; height: 21px; font-size: 9px; color: #444; }
.pager-text { font-size: 7px; margin-right: 9px; color: #333; }
.pg { width: 20px; height: 21px; display: flex; align-items: center; justify-content: center; background: #fff; box-shadow: 0 1px 2px rgba(0,0,0,.25); }
.pg.current { background: #e6e6e6; font-weight: 700; box-shadow: none; }
.pg.spaced { margin-left: 2px; }
.stars { display: inline-flex; margin-left: 10px; vertical-align: -1px; color: #ff9800; }
.stars svg { width: 12px; height: 11px; }

.tags { padding: 11px 26px 0 11px; height: 107px; display: flex; flex-wrap: wrap; column-gap: 4px; align-content: flex-start; }
.tag { background: #6f6f6f; color: #fff; font-size: 9.2px; font-weight: 700; line-height: 14px; border-radius: 7px; padding: 0 4.5px; margin-bottom: 7px; }
.panel-foot { height: 25px; background: #eee; display: flex; align-items: center; justify-content: flex-end; gap: 3px; padding-right: 4px; font-size: 8.3px; color: #445; margin: 0 -1px -1px; }
.panel-foot svg { width: 8px; height: 8px; color: #1d3a52; }
```
